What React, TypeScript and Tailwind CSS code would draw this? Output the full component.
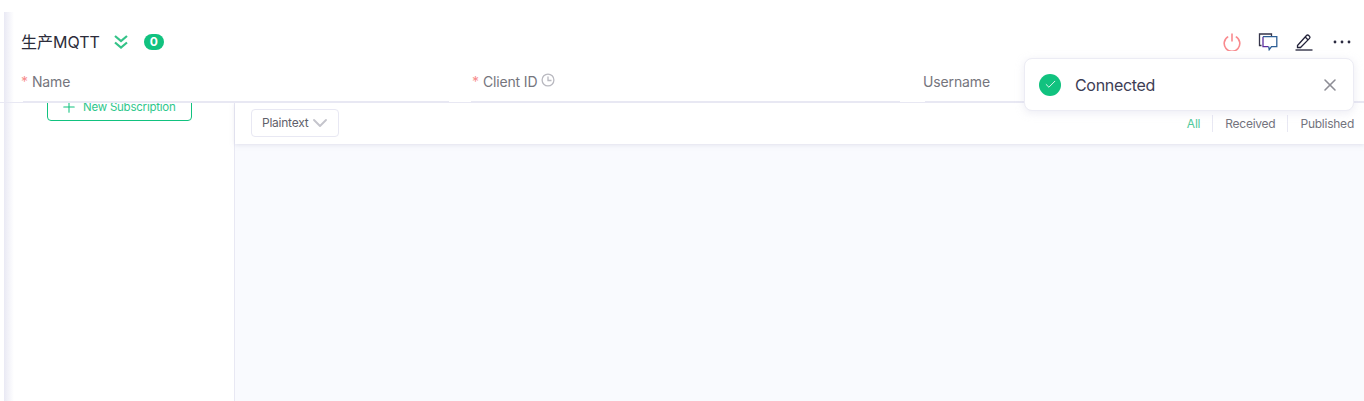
import React from 'react';
import { Check, ChevronDown, Plus, X } from 'lucide-react';

const fontStack = "font-['Inter','Noto_Sans_CJK_SC',sans-serif]";

const DoubleChevron = (): JSX.Element => (
  <svg width="16" height="16" viewBox="0 0 16 16" fill="none" stroke="#34c388" strokeWidth="2.2">
    <path d="M2 2l6 5 6-5" />
    <path d="M2 8.5l6 5 6-5" />
  </svg>
);

const PowerIcon = (): JSX.Element => (
  <svg width="18" height="18" viewBox="0 0 18 18" fill="none" stroke="#f98a8e" strokeWidth="1.6">
    <path d="M5.2 3.6a7.8 7.8 0 1 0 7.6 0" />
    <path d="M9 0.5v8" />
  </svg>
);

const ChatIcon = (): JSX.Element => (
  <svg width="20" height="18" viewBox="0 0 20 18" fill="none" strokeWidth="1.3">
    <path d="M3.5 12.5H1.5V1h12v2.2" stroke="#35354a" />
    <path d="M5 3.7v10h5.5" stroke="#5b2e9e" />
    <path d="M5 3.7h13.8v10h-5.3l-2.3 3 -.5-3" stroke="#2d5f96" />
  </svg>
);

const EditIcon = (): JSX.Element => (
  <svg width="18" height="18" viewBox="0 0 18 18" fill="none" stroke="#23233a" strokeWidth="1.3">
    <path d="M2.5 12.5L11.5 2.5a1.5 1.5 0 0 1 2.2 0l.8.8a1.5 1.5 0 0 1 0 2.1L5.5 14.5H2.5z" />
    <path d="M10.2 4l3 3" />
    <path d="M0.5 17H17.5" />
  </svg>
);

const MoreIcon = (): JSX.Element => (
  <svg width="18" height="4" viewBox="0 0 18 4" fill="#2b2b40">
    <circle cx="2" cy="2" r="1.4" />
    <circle cx="9" cy="2" r="1.4" />
    <circle cx="16" cy="2" r="1.4" />
  </svg>
);

const ClockIcon = (): JSX.Element => (
  <svg width="14" height="14" viewBox="0 0 14 14" fill="none" stroke="#b9b9c0" strokeWidth="1.3">
    <circle cx="7" cy="7" r="5.9" />
    <path d="M7 3.5V7.5H10.5" />
  </svg>
);

const Field = ({
  label,
  required,
  clock,
  className,
  lineClassName,
}: {
  label: string;
  required?: boolean;
  clock?: boolean;
  className: string;
  lineClassName: string;
}): JSX.Element => (
  <div className={`flex flex-col ${className}`}>
    <div className="flex h-[24px] items-center text-[14px] tracking-[-0.01em] text-[#75757d]">
      {required ? <span className="mr-[4px] text-[#f78d8d]">*</span> : null}
      <span>{label}</span>
      {clock ? (
        <span className="mb-[2px] ml-[4px]">
          <ClockIcon />
        </span>
      ) : null}
    </div>
    <div className={`mt-[8px] h-px bg-[#e8e8f3] ${lineClassName}`} />
  </div>
);

export default function App(): JSX.Element {
  return (
    <div className={`relative flex h-[401px] w-[1364px] flex-col overflow-hidden bg-white ${fontStack}`}>
      <header className="relative z-10 h-[103px] shrink-0 border-b border-[#e8e8f3] bg-white">
        <div className="flex items-center pl-[21px] pr-[13px] pt-[32px]">
          <h1 className="text-[16px] leading-[20px] text-[#2c2c3a]">生产MQTT</h1>
          <span className="ml-[13px] flex">
            <DoubleChevron />
          </span>
          <span className="ml-[15px] flex h-[16px] w-[20px] items-center justify-center rounded-full bg-[#11c27f] text-[12px] font-bold text-white">
            0
          </span>
          <div className="ml-auto flex items-center">
            <PowerIcon />
            <span className="ml-[17px] flex">
              <ChatIcon />
            </span>
            <span className="ml-[17px] flex">
              <EditIcon />
            </span>
            <span className="ml-[20px] flex">
              <MoreIcon />
            </span>
          </div>
        </div>
        <div className="mt-[17px] flex pl-[21px]">
          <Field className="w-[451px]" lineClassName="ml-[2px] mr-[23px]" label="Name" required />
          <Field className="w-[451px]" lineClassName="-ml-px mr-[23px]" label="Client ID" required clock />
          <Field className="flex-1" lineClassName="ml-[2px]" label="Username" />
        </div>
      </header>
      <div className="flex min-h-0 flex-1">
        <aside className="w-[235px] shrink-0 border-r border-[#e8e8f3] bg-white">
          <button className="-mt-[10px] ml-[47px] flex h-[28px] w-[145px] items-center gap-[5px] rounded-[4px] border border-[#11c27f] pl-[12px] text-[11.5px] tracking-[-0.02em] text-[#2fc78c]">
            <Plus size={18} strokeWidth={1.4} className="text-[#11c27f]" />
            <span className="pt-[1px]">New Subscription</span>
          </button>
        </aside>
        <main className="flex min-w-0 flex-1 flex-col bg-[#f9fafe]">
          <div className="flex h-[41px] items-center bg-white pl-[16px] pr-[10px] shadow-[0_1px_4px_rgba(200,200,220,0.5)]">
            <div className="-mt-px flex h-[28px] w-[88px] items-center rounded-[4px] border border-[#e8e8f3] pl-[10px] text-[12px] tracking-[-0.02em] text-[#5f5f6b]">
              Plaintext
              <ChevronDown size={24} strokeWidth={1.9} className="text-[#c4c4cc]" />
            </div>
            <div className="ml-auto flex items-center text-[12px] leading-[17px] tracking-[-0.02em] text-[#73737d]">
              <span className="pr-[12px] text-[#4fc99a]">All</span>
              <span className="border-l border-[#e8e8f3] pl-[12px] pr-[12px]">Received</span>
              <span className="border-l border-[#e8e8f3] pl-[12px]">Published</span>
            </div>
          </div>
        </main>
      </div>
      {/* soft shadow from the collapsed sidebar */}
      <div className="pointer-events-none absolute bottom-0 left-[4px] top-[12px] z-10 w-[10px] bg-gradient-to-r from-[#e9e9f4] to-transparent" />
      {/* toast sits over the header */}
      <div className="absolute left-[1024px] top-[58px] z-20 flex h-[53px] w-[330px] items-center rounded-[8px] border border-[#ececf4] bg-white pl-[14px] pr-[13px] shadow-[0_2px_8px_rgba(200,200,220,0.35)]">
        <span className="flex h-[22px] w-[22px] items-center justify-center rounded-full bg-[#11c27f] text-white">
          <Check size={13} strokeWidth={1.6} />
        </span>
        <span className="ml-[14px] text-[16px] tracking-[-0.02em] text-[#3d3d55]">Connected</span>
        <X size={20} strokeWidth={1.9} className="ml-auto text-[#8d8d95]" />
      </div>
    </div>
  );
}
